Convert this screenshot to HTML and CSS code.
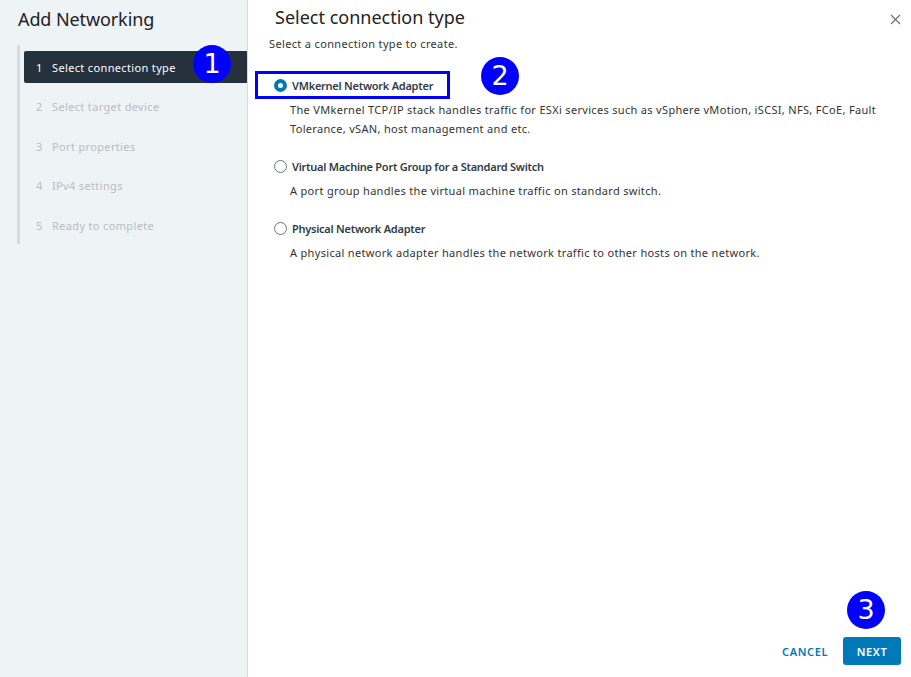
FILE: index.html
```html
<!DOCTYPE html>
<html>
<head>
<meta charset="utf-8">
<link rel="stylesheet" href="styles.css">
</head>
<body>
<div class="dialog">
  <aside class="sidebar">
    <h1 class="title">Add Networking</h1>
    <ol class="steps">
      <li class="step active"><span class="num">1</span><span>Select connection type</span></li>
      <li class="step"><span class="num">2</span><span>Select target device</span></li>
      <li class="step"><span class="num">3</span><span>Port properties</span></li>
      <li class="step"><span class="num">4</span><span>IPv4 settings</span></li>
      <li class="step"><span class="num">5</span><span>Ready to complete</span></li>
    </ol>
  </aside>
  <main class="main">
    <header class="head">
      <h2 class="heading">Select connection type</h2>
      <button class="close" aria-label="Close">
        <svg width="11" height="11" viewBox="0 0 11 11"><path d="M1 1L10 10M10 1L1 10" stroke="#6b7378" stroke-width="1.2" fill="none"/></svg>
      </button>
    </header>
    <p class="sub">Select a connection type to create.</p>
    <div class="options">
      <div class="option">
        <div class="opt-label highlighted"><span class="radio checked"></span><span>VMkernel Network Adapter</span></div>
        <p class="desc">The VMkernel TCP/IP stack handles traffic for ESXi services such as vSphere vMotion, iSCSI, NFS, FCoE, Fault Tolerance, vSAN, host management and etc.</p>
      </div>
      <div class="option">
        <div class="opt-label"><span class="radio"></span><span>Virtual Machine Port Group for a Standard Switch</span></div>
        <p class="desc">A port group handles the virtual machine traffic on standard switch.</p>
      </div>
      <div class="option">
        <div class="opt-label"><span class="radio"></span><span>Physical Network Adapter</span></div>
        <p class="desc">A physical network adapter handles the network traffic to other hosts on the network.</p>
      </div>
    </div>
    <footer class="footer">
      <button class="btn-link">CANCEL</button>
      <button class="btn-primary">NEXT</button>
    </footer>
  </main>
  <span class="badge b1">1</span>
  <span class="badge b2">2</span>
  <span class="badge b3">3</span>
</div>
</body>
</html>
```

FILE: styles.css
```css
* { box-sizing: border-box; }
html, body { margin: 0; padding: 0; }
body {
  width: 911px;
  height: 677px;
  font-family: "Noto Sans", "Open Sans", sans-serif;
  color: #333;
  background: #fff;
}
.dialog {
  position: relative;
  display: flex;
  width: 911px;
  height: 677px;
}
.sidebar {
  width: 248px;
  flex: none;
  background: #eef3f6;
  border-right: 1px solid #d7dcdf;
  padding: 6px 0 0 17px;
}
.title {
  margin: 0 0 13px 1px;
  font-size: 18px;
  font-weight: 400;
  color: #222;
  line-height: 26px;
  letter-spacing: -0.1px;
}
.steps {
  list-style: none;
  margin: 0;
  padding: 6px 0 0 0;
  border-left: 3px solid #d4dadf;
  height: 199px;
}
.step {
  display: flex;
  align-items: center;
  height: 32px;
  margin: 0 0 7.5px 4px;
  padding-left: 12px;
  font-size: 11px;
  letter-spacing: 0.35px;
  color: #b9bdc1;
  border-radius: 2px 0 0 2px;
}
.step .num { width: 16px; }
.step.active {
  background: #25313d;
  color: #fff;
}
.main {
  flex: 1;
  display: flex;
  flex-direction: column;
  padding: 4px 10px 12px 21px;
}
.head {
  display: flex;
  justify-content: space-between;
  align-items: flex-start;
}
.heading {
  margin: 0 0 0 6px;
  font-size: 18px;
  font-weight: 400;
  color: #222;
  line-height: 26px;
}
.close {
  border: 0;
  background: none;
  padding: 0;
  margin-top: 10px;
  width: 11px;
  height: 11px;
  display: flex;
}
.sub {
  margin: 7px 0 0 0;
  font-size: 11px;
  line-height: 14px;
  letter-spacing: 0.35px;
  color: #333;
}
.options {
  margin-top: 20px;
  display: flex;
  flex-direction: column;
  gap: 14px;
}
.opt-label {
  display: inline-flex;
  align-items: center;
  gap: 5px;
  height: 28px;
  padding-left: 16px;
  margin-left: -14px;
  font-size: 11px;
  font-weight: 600;
  letter-spacing: -0.25px;
  color: #313b44;
  border: 3px solid transparent;
}
.opt-label.highlighted {
  border-color: #0000ff;
  width: 195px;
}
.radio {
  width: 13px;
  height: 13px;
  border-radius: 50%;
  border: 1px solid #6b7378;
  background: #fff;
  flex: none;
}
.radio.checked {
  border: 4px solid #0079b8;
  background: #fff;
}
.desc {
  margin: 1px 0 0 21px;
  font-size: 11px;
  line-height: 19px;
  letter-spacing: 0.32px;
  color: #333;
  max-width: 600px;
}
.footer {
  margin-top: auto;
  display: flex;
  justify-content: flex-end;
  align-items: center;
  gap: 15px;
}
.btn-link {
  border: 0;
  background: none;
  font-family: inherit;
  font-size: 11px;
  font-weight: 600;
  color: #0079b8;
  letter-spacing: 0.6px;
  padding: 0;
}
.btn-primary {
  border: 0;
  background: #0079b8;
  color: #fff;
  font-family: inherit;
  font-size: 11px;
  font-weight: 600;
  letter-spacing: 0.6px;
  width: 58px;
  height: 28px;
  border-radius: 3px;
}
.badge {
  position: absolute;
  width: 38px;
  height: 38px;
  border-radius: 50%;
  background: #0000ff;
  color: #fff;
  font-family: "DejaVu Sans", sans-serif;
  font-size: 27px;
  line-height: 38px;
  text-align: center;
}
.b1 { left: 193px; top: 45px; }
.b2 { left: 481px; top: 57px; }
.b3 { left: 847px; top: 591px; }
```
